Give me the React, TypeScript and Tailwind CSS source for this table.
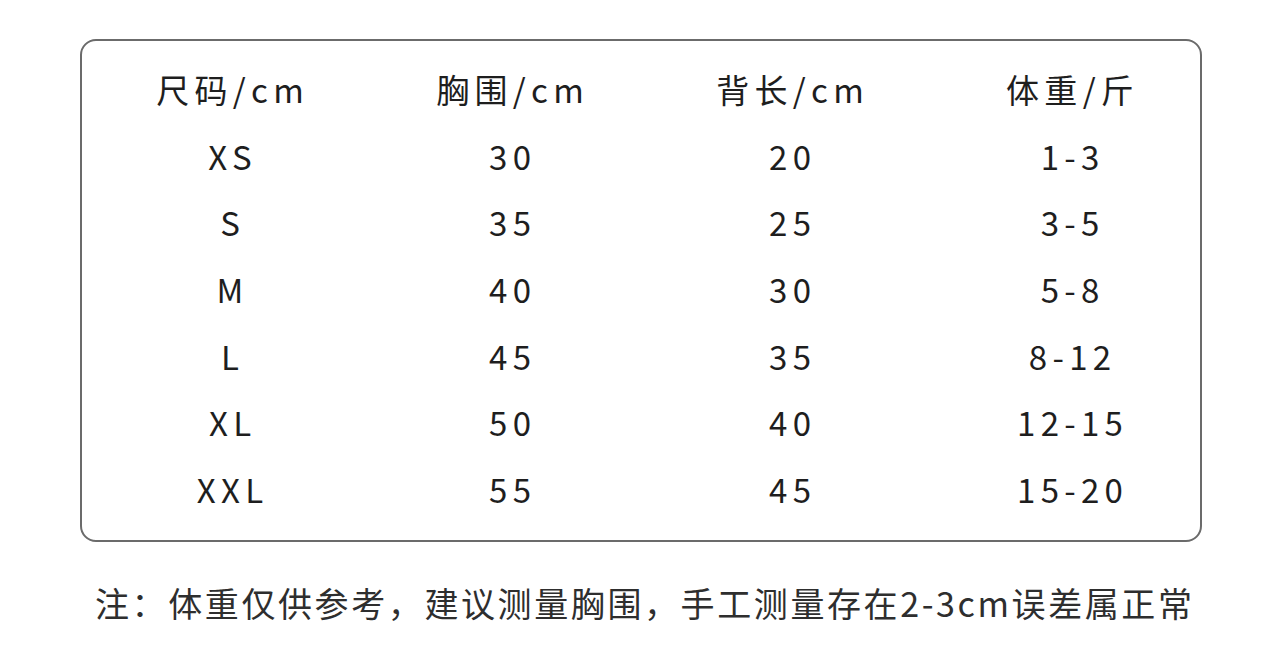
const rows: string[][] = [
  ["尺码/cm", "胸围/cm", "背长/cm", "体重/斤"],
  ["XS", "30", "20", "1-3"],
  ["S", "35", "25", "3-5"],
  ["M", "40", "30", "5-8"],
  ["L", "45", "35", "8-12"],
  ["XL", "50", "40", "12-15"],
  ["XXL", "55", "45", "15-20"],
];

export default function App() {
  return (
    <div
      className="w-[1284px] h-[654px] bg-white text-[#1e1e1e] overflow-hidden"
      style={{ fontFamily: '"Noto Sans CJK SC", "Noto Sans", sans-serif' }}
    >
      <div className="pt-[39px] pl-[80px]">
        <div className="w-[1122px] h-[503px] border-2 border-[#6b6b6b] rounded-[16px] pt-[15px] pl-[8px]">
          {rows.map((row, i) => (
            <div key={i} className="grid grid-cols-[repeat(4,280px)] h-[66.7px]">
              {row.map((cell, j) => (
                <div
                  key={j}
                  className="flex items-center justify-center text-[33px] leading-none tracking-[0.16em] pl-[0.16em]"
                >
                  {cell}
                </div>
              ))}
            </div>
          ))}
        </div>
      </div>
      <div className="pt-[41px] pl-[95px] text-[34px] leading-[40px] tracking-[2.6px] text-[#2e2e2e] whitespace-nowrap">
        注：体重仅供参考，建议测量胸围，手工测量存在2-3cm误差属正常
      </div>
    </div>
  );
}
